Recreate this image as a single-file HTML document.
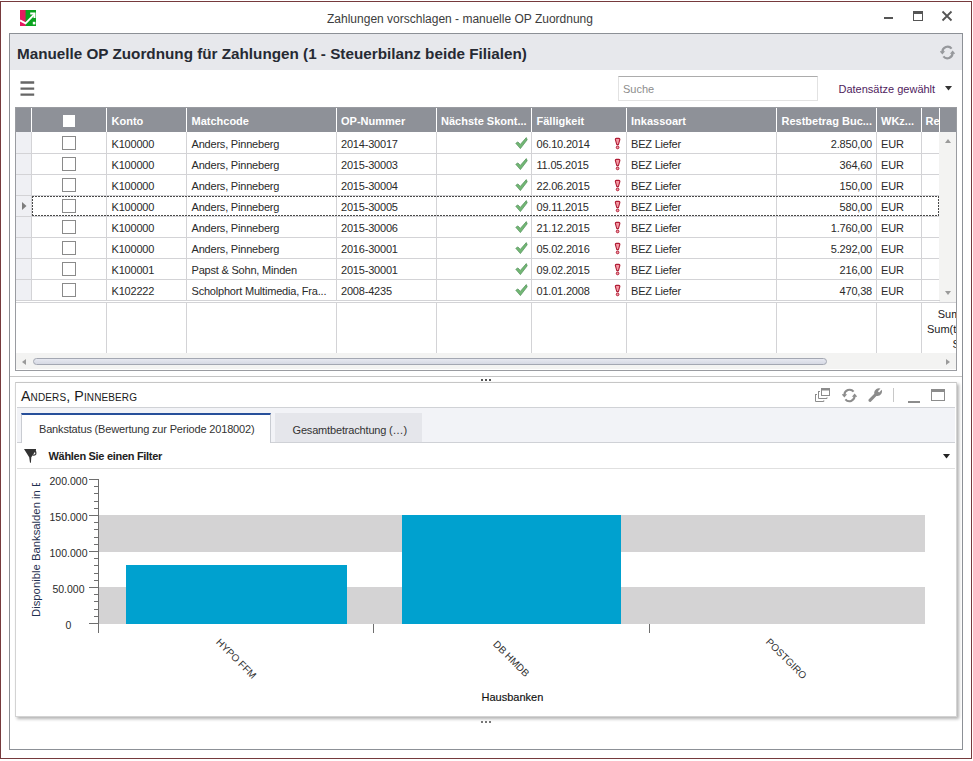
<!DOCTYPE html>
<html><head><meta charset="utf-8"><style>
html,body{margin:0;padding:0;width:973px;height:761px;overflow:hidden;background:#fff;}
body{position:relative;font-family:"Liberation Sans", sans-serif;}
div{position:absolute;box-sizing:content-box;}
.t{white-space:nowrap;}
</style></head><body>
<div style="left:0;top:1px;width:970px;height:756px;border:1px solid #763a3d;background:#fff"></div>
<svg style="position:absolute;left:20px;top:10px" width="16" height="16" viewBox="0 0 16 16">
<rect x="0" y="0" width="16" height="16" fill="#0aa31e"/><rect x="0" y="0" width="5.6" height="16" fill="#e5195e"/>
<path d="M0 10.4 L5.6 13.3 L14 4.6" stroke="#fff" stroke-width="1.9" fill="none"/>
<path d="M10.2 3.6 L14.5 3.6 L14.5 8" stroke="#fff" stroke-width="2" fill="none"/>
<rect x="12.8" y="11.8" width="2.6" height="2.6" fill="#fff"/></svg>
<div class="t" style="left:160px;width:600px;text-align:center;top:12.84px;font-size:12px;line-height:12px;color:#3c3c3c;font-weight:400;">Zahlungen vorschlagen - manuelle OP Zuordnung</div>
<div style="left:884px;top:17px;width:9px;height:2px;background:#555;"></div>
<div style="left:913px;top:11px;width:8px;height:6px;border:1px solid #555;border-top:3px solid #555"></div>
<svg style="position:absolute;left:941px;top:10px" width="12" height="12" viewBox="0 0 12 12">
<path d="M1.5 1.5 L10.5 10.5 M10.5 1.5 L1.5 10.5" stroke="#555" stroke-width="1.8"/></svg>
<div style="left:9px;top:33px;width:952px;height:715px;border:1px solid #8c9096;background:#fff"></div>
<div style="left:10px;top:34px;width:952px;height:36px;background:#e7e8ec;"></div>
<div class="t" style="left:17px;top:46.09px;font-size:15.25px;line-height:15.25px;color:#262a33;font-weight:700;">Manuelle OP Zuordnung für Zahlungen (1 - Steuerbilanz beide Filialen)</div>
<svg style="position:absolute;left:940px;top:44.5px" width="15" height="15" viewBox="0 0 15 15">
<path d="M11.6 3.6 A5.2 5.2 0 0 0 2.4 7" stroke="#96989c" stroke-width="2.2" fill="none"/>
<path d="M-0.3 6.3 L5.1 6.3 L2.4 9.6 Z" fill="#96989c"/>
<path d="M3.4 11.4 A5.2 5.2 0 0 0 12.6 8" stroke="#96989c" stroke-width="2.2" fill="none"/>
<path d="M9.9 8.7 L15.3 8.7 L12.6 5.4 Z" fill="#96989c"/></svg>
<svg style="position:absolute;left:18px;top:78px" width="20" height="20"><path d="M2.5 4.45 H16.2 M2.5 10.65 H16.2 M2.5 16.65 H16.2" stroke="#666" stroke-width="2.4"/></svg>
<div style="left:618px;top:76px;width:198px;height:23px;border:1px solid #e2e2e2;border-top-color:#acacac;background:#fff"></div>
<div class="t" style="left:623px;top:83.69px;font-size:11px;line-height:11px;color:#8d8d8d;font-weight:400;">Suche</div>
<div class="t" style="left:838.5px;top:84.19px;font-size:11px;line-height:11px;color:#4f1c5e;font-weight:400;">Datensätze gewählt</div>
<svg style="position:absolute;left:945px;top:86px" width="7" height="5"><path d="M0 0 L7 0 L3.5 4.5Z" fill="#333"/></svg>
<div style="left:15px;top:107px;width:940px;height:262px;border:1px solid #9a9ca1;background:#fff"></div>
<div style="left:16px;top:108px;width:940px;height:24px;background:#8e9198;"></div>
<div style="left:31px;top:108px;width:1px;height:24px;background:#fff;"></div>
<div style="left:106px;top:108px;width:1px;height:24px;background:#fff;"></div>
<div style="left:186px;top:108px;width:1px;height:24px;background:#fff;"></div>
<div style="left:336px;top:108px;width:1px;height:24px;background:#fff;"></div>
<div style="left:436px;top:108px;width:1px;height:24px;background:#fff;"></div>
<div style="left:531px;top:108px;width:1px;height:24px;background:#fff;"></div>
<div style="left:626px;top:108px;width:1px;height:24px;background:#fff;"></div>
<div style="left:776px;top:108px;width:1px;height:24px;background:#fff;"></div>
<div style="left:876px;top:108px;width:1px;height:24px;background:#fff;"></div>
<div style="left:921px;top:108px;width:1px;height:24px;background:#fff;"></div>
<div style="left:939px;top:108px;width:1px;height:24px;background:#fff;"></div>
<div style="left:940px;top:108px;width:16px;height:24px;background:#8e9198;"></div>
<div style="left:63px;top:115px;width:12px;height:12px;background:#fff;"></div>
<div class="t" style="left:111.5px;top:115.89px;font-size:11px;line-height:11px;color:#fff;font-weight:700;">Konto</div>
<div class="t" style="left:191.5px;top:115.89px;font-size:11px;line-height:11px;color:#fff;font-weight:700;">Matchcode</div>
<div class="t" style="left:341px;top:115.89px;font-size:11px;line-height:11px;color:#fff;font-weight:700;">OP-Nummer</div>
<div class="t" style="left:441px;top:115.89px;font-size:11px;line-height:11px;color:#fff;font-weight:700;">Nächste Skont...</div>
<div class="t" style="left:536.5px;top:115.89px;font-size:11px;line-height:11px;color:#fff;font-weight:700;">Fälligkeit</div>
<div class="t" style="left:631px;top:115.89px;font-size:11px;line-height:11px;color:#fff;font-weight:700;">Inkassoart</div>
<div class="t" style="left:781.5px;top:115.89px;font-size:11px;line-height:11px;color:#fff;font-weight:700;">Restbetrag Buc...</div>
<div class="t" style="left:881px;top:115.89px;font-size:11px;line-height:11px;color:#fff;font-weight:700;">WKz...</div>
<div style="position:absolute;left:921px;top:108px;width:18px;height:24px;overflow:hidden"><div class="t" style="left:4.5px;top:7.9px;font-size:11px;line-height:11px;color:#fff;font-weight:700">Re</div></div>
<div style="left:16px;top:132px;width:15px;height:168px;background:#eff0f4;"></div>
<div style="left:16px;top:153px;width:923px;height:1px;background:#d3d3d6;"></div>
<div style="left:16px;top:174px;width:923px;height:1px;background:#d3d3d6;"></div>
<div style="left:16px;top:195px;width:923px;height:1px;background:#d3d3d6;"></div>
<div style="left:16px;top:216px;width:923px;height:1px;background:#d3d3d6;"></div>
<div style="left:16px;top:237px;width:923px;height:1px;background:#d3d3d6;"></div>
<div style="left:16px;top:258px;width:923px;height:1px;background:#d3d3d6;"></div>
<div style="left:16px;top:279px;width:923px;height:1px;background:#d3d3d6;"></div>
<div style="left:16px;top:300px;width:923px;height:1px;background:#d3d3d6;"></div>
<div style="left:31px;top:132px;width:1px;height:168px;background:#d3d3d6;"></div>
<div style="left:106px;top:132px;width:1px;height:168px;background:#d3d3d6;"></div>
<div style="left:186px;top:132px;width:1px;height:168px;background:#d3d3d6;"></div>
<div style="left:336px;top:132px;width:1px;height:168px;background:#d3d3d6;"></div>
<div style="left:436px;top:132px;width:1px;height:168px;background:#d3d3d6;"></div>
<div style="left:531px;top:132px;width:1px;height:168px;background:#d3d3d6;"></div>
<div style="left:626px;top:132px;width:1px;height:168px;background:#d3d3d6;"></div>
<div style="left:776px;top:132px;width:1px;height:168px;background:#d3d3d6;"></div>
<div style="left:876px;top:132px;width:1px;height:168px;background:#d3d3d6;"></div>
<div style="left:921px;top:132px;width:1px;height:168px;background:#d3d3d6;"></div>
<div style="left:16px;top:302px;width:940px;height:1px;background:#d3d3d6;"></div>
<div style="left:62px;top:136px;width:12px;height:12px;border:1px solid #8a8a8a;background:#fff"></div>
<div class="t" style="left:111.5px;top:138.69px;font-size:11px;line-height:11px;color:#2a2a2a;font-weight:400;letter-spacing:-0.2px">K100000</div>
<div class="t" style="left:191.5px;top:138.69px;font-size:11px;line-height:11px;color:#2a2a2a;font-weight:400;letter-spacing:-0.2px">Anders, Pinneberg</div>
<div class="t" style="left:341px;top:138.69px;font-size:11px;line-height:11px;color:#2a2a2a;font-weight:400;letter-spacing:-0.2px">2014-30017</div>
<div class="t" style="left:536.5px;top:138.69px;font-size:11px;line-height:11px;color:#2a2a2a;font-weight:400;letter-spacing:-0.2px">06.10.2014</div>
<div class="t" style="left:631px;top:138.69px;font-size:11px;line-height:11px;color:#2a2a2a;font-weight:400;letter-spacing:-0.2px">BEZ Liefer</div>
<div class="t" style="right:101px;top:138.69px;font-size:11px;line-height:11px;color:#2a2a2a;font-weight:400;text-align:right;letter-spacing:-0.2px">2.850,00</div>
<div class="t" style="left:881px;top:138.69px;font-size:11px;line-height:11px;color:#2a2a2a;font-weight:400;letter-spacing:-0.2px">EUR</div>
<svg style="position:absolute;left:515px;top:137px" width="13" height="13" viewBox="0 0 13 13"><path d="M0.8 6.3 L2.9 4.9 L5.3 7.4 L11.3 0.6 L12.2 2.8 L5.4 11.6 Z" fill="#72b874" stroke="#4f8d58" stroke-width="0.7" stroke-linejoin="round"/></svg>
<svg style="position:absolute;left:613px;top:136px" width="9" height="14" viewBox="0 0 9 14"><path d="M2.3 3.4 Q2.3 2.4 3.3 2.4 L5.9 2.4 Q6.9 2.4 6.9 3.4 L5.4 8.6 L3.8 8.6 Z" fill="#f59aa5" stroke="#b01c35" stroke-width="1.1" stroke-linejoin="round"/><circle cx="4.6" cy="11.4" r="1.35" fill="#f59aa5" stroke="#b01c35" stroke-width="1"/></svg>
<div style="left:62px;top:157px;width:12px;height:12px;border:1px solid #8a8a8a;background:#fff"></div>
<div class="t" style="left:111.5px;top:159.69px;font-size:11px;line-height:11px;color:#2a2a2a;font-weight:400;letter-spacing:-0.2px">K100000</div>
<div class="t" style="left:191.5px;top:159.69px;font-size:11px;line-height:11px;color:#2a2a2a;font-weight:400;letter-spacing:-0.2px">Anders, Pinneberg</div>
<div class="t" style="left:341px;top:159.69px;font-size:11px;line-height:11px;color:#2a2a2a;font-weight:400;letter-spacing:-0.2px">2015-30003</div>
<div class="t" style="left:536.5px;top:159.69px;font-size:11px;line-height:11px;color:#2a2a2a;font-weight:400;letter-spacing:-0.2px">11.05.2015</div>
<div class="t" style="left:631px;top:159.69px;font-size:11px;line-height:11px;color:#2a2a2a;font-weight:400;letter-spacing:-0.2px">BEZ Liefer</div>
<div class="t" style="right:101px;top:159.69px;font-size:11px;line-height:11px;color:#2a2a2a;font-weight:400;text-align:right;letter-spacing:-0.2px">364,60</div>
<div class="t" style="left:881px;top:159.69px;font-size:11px;line-height:11px;color:#2a2a2a;font-weight:400;letter-spacing:-0.2px">EUR</div>
<svg style="position:absolute;left:515px;top:158px" width="13" height="13" viewBox="0 0 13 13"><path d="M0.8 6.3 L2.9 4.9 L5.3 7.4 L11.3 0.6 L12.2 2.8 L5.4 11.6 Z" fill="#72b874" stroke="#4f8d58" stroke-width="0.7" stroke-linejoin="round"/></svg>
<svg style="position:absolute;left:613px;top:157px" width="9" height="14" viewBox="0 0 9 14"><path d="M2.3 3.4 Q2.3 2.4 3.3 2.4 L5.9 2.4 Q6.9 2.4 6.9 3.4 L5.4 8.6 L3.8 8.6 Z" fill="#f59aa5" stroke="#b01c35" stroke-width="1.1" stroke-linejoin="round"/><circle cx="4.6" cy="11.4" r="1.35" fill="#f59aa5" stroke="#b01c35" stroke-width="1"/></svg>
<div style="left:62px;top:178px;width:12px;height:12px;border:1px solid #8a8a8a;background:#fff"></div>
<div class="t" style="left:111.5px;top:180.69px;font-size:11px;line-height:11px;color:#2a2a2a;font-weight:400;letter-spacing:-0.2px">K100000</div>
<div class="t" style="left:191.5px;top:180.69px;font-size:11px;line-height:11px;color:#2a2a2a;font-weight:400;letter-spacing:-0.2px">Anders, Pinneberg</div>
<div class="t" style="left:341px;top:180.69px;font-size:11px;line-height:11px;color:#2a2a2a;font-weight:400;letter-spacing:-0.2px">2015-30004</div>
<div class="t" style="left:536.5px;top:180.69px;font-size:11px;line-height:11px;color:#2a2a2a;font-weight:400;letter-spacing:-0.2px">22.06.2015</div>
<div class="t" style="left:631px;top:180.69px;font-size:11px;line-height:11px;color:#2a2a2a;font-weight:400;letter-spacing:-0.2px">BEZ Liefer</div>
<div class="t" style="right:101px;top:180.69px;font-size:11px;line-height:11px;color:#2a2a2a;font-weight:400;text-align:right;letter-spacing:-0.2px">150,00</div>
<div class="t" style="left:881px;top:180.69px;font-size:11px;line-height:11px;color:#2a2a2a;font-weight:400;letter-spacing:-0.2px">EUR</div>
<svg style="position:absolute;left:515px;top:179px" width="13" height="13" viewBox="0 0 13 13"><path d="M0.8 6.3 L2.9 4.9 L5.3 7.4 L11.3 0.6 L12.2 2.8 L5.4 11.6 Z" fill="#72b874" stroke="#4f8d58" stroke-width="0.7" stroke-linejoin="round"/></svg>
<svg style="position:absolute;left:613px;top:178px" width="9" height="14" viewBox="0 0 9 14"><path d="M2.3 3.4 Q2.3 2.4 3.3 2.4 L5.9 2.4 Q6.9 2.4 6.9 3.4 L5.4 8.6 L3.8 8.6 Z" fill="#f59aa5" stroke="#b01c35" stroke-width="1.1" stroke-linejoin="round"/><circle cx="4.6" cy="11.4" r="1.35" fill="#f59aa5" stroke="#b01c35" stroke-width="1"/></svg>
<div style="left:62px;top:199px;width:12px;height:12px;border:1px solid #8a8a8a;background:#fff"></div>
<div class="t" style="left:111.5px;top:201.69px;font-size:11px;line-height:11px;color:#2a2a2a;font-weight:400;letter-spacing:-0.2px">K100000</div>
<div class="t" style="left:191.5px;top:201.69px;font-size:11px;line-height:11px;color:#2a2a2a;font-weight:400;letter-spacing:-0.2px">Anders, Pinneberg</div>
<div class="t" style="left:341px;top:201.69px;font-size:11px;line-height:11px;color:#2a2a2a;font-weight:400;letter-spacing:-0.2px">2015-30005</div>
<div class="t" style="left:536.5px;top:201.69px;font-size:11px;line-height:11px;color:#2a2a2a;font-weight:400;letter-spacing:-0.2px">09.11.2015</div>
<div class="t" style="left:631px;top:201.69px;font-size:11px;line-height:11px;color:#2a2a2a;font-weight:400;letter-spacing:-0.2px">BEZ Liefer</div>
<div class="t" style="right:101px;top:201.69px;font-size:11px;line-height:11px;color:#2a2a2a;font-weight:400;text-align:right;letter-spacing:-0.2px">580,00</div>
<div class="t" style="left:881px;top:201.69px;font-size:11px;line-height:11px;color:#2a2a2a;font-weight:400;letter-spacing:-0.2px">EUR</div>
<svg style="position:absolute;left:515px;top:200px" width="13" height="13" viewBox="0 0 13 13"><path d="M0.8 6.3 L2.9 4.9 L5.3 7.4 L11.3 0.6 L12.2 2.8 L5.4 11.6 Z" fill="#72b874" stroke="#4f8d58" stroke-width="0.7" stroke-linejoin="round"/></svg>
<svg style="position:absolute;left:613px;top:199px" width="9" height="14" viewBox="0 0 9 14"><path d="M2.3 3.4 Q2.3 2.4 3.3 2.4 L5.9 2.4 Q6.9 2.4 6.9 3.4 L5.4 8.6 L3.8 8.6 Z" fill="#f59aa5" stroke="#b01c35" stroke-width="1.1" stroke-linejoin="round"/><circle cx="4.6" cy="11.4" r="1.35" fill="#f59aa5" stroke="#b01c35" stroke-width="1"/></svg>
<div style="left:62px;top:220px;width:12px;height:12px;border:1px solid #8a8a8a;background:#fff"></div>
<div class="t" style="left:111.5px;top:222.69px;font-size:11px;line-height:11px;color:#2a2a2a;font-weight:400;letter-spacing:-0.2px">K100000</div>
<div class="t" style="left:191.5px;top:222.69px;font-size:11px;line-height:11px;color:#2a2a2a;font-weight:400;letter-spacing:-0.2px">Anders, Pinneberg</div>
<div class="t" style="left:341px;top:222.69px;font-size:11px;line-height:11px;color:#2a2a2a;font-weight:400;letter-spacing:-0.2px">2015-30006</div>
<div class="t" style="left:536.5px;top:222.69px;font-size:11px;line-height:11px;color:#2a2a2a;font-weight:400;letter-spacing:-0.2px">21.12.2015</div>
<div class="t" style="left:631px;top:222.69px;font-size:11px;line-height:11px;color:#2a2a2a;font-weight:400;letter-spacing:-0.2px">BEZ Liefer</div>
<div class="t" style="right:101px;top:222.69px;font-size:11px;line-height:11px;color:#2a2a2a;font-weight:400;text-align:right;letter-spacing:-0.2px">1.760,00</div>
<div class="t" style="left:881px;top:222.69px;font-size:11px;line-height:11px;color:#2a2a2a;font-weight:400;letter-spacing:-0.2px">EUR</div>
<svg style="position:absolute;left:515px;top:221px" width="13" height="13" viewBox="0 0 13 13"><path d="M0.8 6.3 L2.9 4.9 L5.3 7.4 L11.3 0.6 L12.2 2.8 L5.4 11.6 Z" fill="#72b874" stroke="#4f8d58" stroke-width="0.7" stroke-linejoin="round"/></svg>
<svg style="position:absolute;left:613px;top:220px" width="9" height="14" viewBox="0 0 9 14"><path d="M2.3 3.4 Q2.3 2.4 3.3 2.4 L5.9 2.4 Q6.9 2.4 6.9 3.4 L5.4 8.6 L3.8 8.6 Z" fill="#f59aa5" stroke="#b01c35" stroke-width="1.1" stroke-linejoin="round"/><circle cx="4.6" cy="11.4" r="1.35" fill="#f59aa5" stroke="#b01c35" stroke-width="1"/></svg>
<div style="left:62px;top:241px;width:12px;height:12px;border:1px solid #8a8a8a;background:#fff"></div>
<div class="t" style="left:111.5px;top:243.69px;font-size:11px;line-height:11px;color:#2a2a2a;font-weight:400;letter-spacing:-0.2px">K100000</div>
<div class="t" style="left:191.5px;top:243.69px;font-size:11px;line-height:11px;color:#2a2a2a;font-weight:400;letter-spacing:-0.2px">Anders, Pinneberg</div>
<div class="t" style="left:341px;top:243.69px;font-size:11px;line-height:11px;color:#2a2a2a;font-weight:400;letter-spacing:-0.2px">2016-30001</div>
<div class="t" style="left:536.5px;top:243.69px;font-size:11px;line-height:11px;color:#2a2a2a;font-weight:400;letter-spacing:-0.2px">05.02.2016</div>
<div class="t" style="left:631px;top:243.69px;font-size:11px;line-height:11px;color:#2a2a2a;font-weight:400;letter-spacing:-0.2px">BEZ Liefer</div>
<div class="t" style="right:101px;top:243.69px;font-size:11px;line-height:11px;color:#2a2a2a;font-weight:400;text-align:right;letter-spacing:-0.2px">5.292,00</div>
<div class="t" style="left:881px;top:243.69px;font-size:11px;line-height:11px;color:#2a2a2a;font-weight:400;letter-spacing:-0.2px">EUR</div>
<svg style="position:absolute;left:515px;top:242px" width="13" height="13" viewBox="0 0 13 13"><path d="M0.8 6.3 L2.9 4.9 L5.3 7.4 L11.3 0.6 L12.2 2.8 L5.4 11.6 Z" fill="#72b874" stroke="#4f8d58" stroke-width="0.7" stroke-linejoin="round"/></svg>
<svg style="position:absolute;left:613px;top:241px" width="9" height="14" viewBox="0 0 9 14"><path d="M2.3 3.4 Q2.3 2.4 3.3 2.4 L5.9 2.4 Q6.9 2.4 6.9 3.4 L5.4 8.6 L3.8 8.6 Z" fill="#f59aa5" stroke="#b01c35" stroke-width="1.1" stroke-linejoin="round"/><circle cx="4.6" cy="11.4" r="1.35" fill="#f59aa5" stroke="#b01c35" stroke-width="1"/></svg>
<div style="left:62px;top:262px;width:12px;height:12px;border:1px solid #8a8a8a;background:#fff"></div>
<div class="t" style="left:111.5px;top:264.69px;font-size:11px;line-height:11px;color:#2a2a2a;font-weight:400;letter-spacing:-0.2px">K100001</div>
<div class="t" style="left:191.5px;top:264.69px;font-size:11px;line-height:11px;color:#2a2a2a;font-weight:400;letter-spacing:-0.2px">Papst &amp; Sohn, Minden</div>
<div class="t" style="left:341px;top:264.69px;font-size:11px;line-height:11px;color:#2a2a2a;font-weight:400;letter-spacing:-0.2px">2015-30001</div>
<div class="t" style="left:536.5px;top:264.69px;font-size:11px;line-height:11px;color:#2a2a2a;font-weight:400;letter-spacing:-0.2px">09.02.2015</div>
<div class="t" style="left:631px;top:264.69px;font-size:11px;line-height:11px;color:#2a2a2a;font-weight:400;letter-spacing:-0.2px">BEZ Liefer</div>
<div class="t" style="right:101px;top:264.69px;font-size:11px;line-height:11px;color:#2a2a2a;font-weight:400;text-align:right;letter-spacing:-0.2px">216,00</div>
<div class="t" style="left:881px;top:264.69px;font-size:11px;line-height:11px;color:#2a2a2a;font-weight:400;letter-spacing:-0.2px">EUR</div>
<svg style="position:absolute;left:515px;top:263px" width="13" height="13" viewBox="0 0 13 13"><path d="M0.8 6.3 L2.9 4.9 L5.3 7.4 L11.3 0.6 L12.2 2.8 L5.4 11.6 Z" fill="#72b874" stroke="#4f8d58" stroke-width="0.7" stroke-linejoin="round"/></svg>
<svg style="position:absolute;left:613px;top:262px" width="9" height="14" viewBox="0 0 9 14"><path d="M2.3 3.4 Q2.3 2.4 3.3 2.4 L5.9 2.4 Q6.9 2.4 6.9 3.4 L5.4 8.6 L3.8 8.6 Z" fill="#f59aa5" stroke="#b01c35" stroke-width="1.1" stroke-linejoin="round"/><circle cx="4.6" cy="11.4" r="1.35" fill="#f59aa5" stroke="#b01c35" stroke-width="1"/></svg>
<div style="left:62px;top:283px;width:12px;height:12px;border:1px solid #8a8a8a;background:#fff"></div>
<div class="t" style="left:111.5px;top:285.69px;font-size:11px;line-height:11px;color:#2a2a2a;font-weight:400;letter-spacing:-0.2px">K102222</div>
<div class="t" style="left:191.5px;top:285.69px;font-size:11px;line-height:11px;color:#2a2a2a;font-weight:400;letter-spacing:-0.2px">Scholphort Multimedia, Fra...</div>
<div class="t" style="left:341px;top:285.69px;font-size:11px;line-height:11px;color:#2a2a2a;font-weight:400;letter-spacing:-0.2px">2008-4235</div>
<div class="t" style="left:536.5px;top:285.69px;font-size:11px;line-height:11px;color:#2a2a2a;font-weight:400;letter-spacing:-0.2px">01.01.2008</div>
<div class="t" style="left:631px;top:285.69px;font-size:11px;line-height:11px;color:#2a2a2a;font-weight:400;letter-spacing:-0.2px">BEZ Liefer</div>
<div class="t" style="right:101px;top:285.69px;font-size:11px;line-height:11px;color:#2a2a2a;font-weight:400;text-align:right;letter-spacing:-0.2px">470,38</div>
<div class="t" style="left:881px;top:285.69px;font-size:11px;line-height:11px;color:#2a2a2a;font-weight:400;letter-spacing:-0.2px">EUR</div>
<svg style="position:absolute;left:515px;top:284px" width="13" height="13" viewBox="0 0 13 13"><path d="M0.8 6.3 L2.9 4.9 L5.3 7.4 L11.3 0.6 L12.2 2.8 L5.4 11.6 Z" fill="#72b874" stroke="#4f8d58" stroke-width="0.7" stroke-linejoin="round"/></svg>
<svg style="position:absolute;left:613px;top:283px" width="9" height="14" viewBox="0 0 9 14"><path d="M2.3 3.4 Q2.3 2.4 3.3 2.4 L5.9 2.4 Q6.9 2.4 6.9 3.4 L5.4 8.6 L3.8 8.6 Z" fill="#f59aa5" stroke="#b01c35" stroke-width="1.1" stroke-linejoin="round"/><circle cx="4.6" cy="11.4" r="1.35" fill="#f59aa5" stroke="#b01c35" stroke-width="1"/></svg>
<svg style="position:absolute;left:22px;top:202px" width="5" height="8"><path d="M0 0 L4.5 4 L0 8Z" fill="#7d7d7d"/></svg>
<div style="left:32px;top:196px;width:907px;height:1px;background:repeating-linear-gradient(90deg,#4a4a4a 0 2px,transparent 2px 3px);"></div>
<div style="left:32px;top:215px;width:907px;height:1px;background:repeating-linear-gradient(90deg,#4a4a4a 0 2px,transparent 2px 3px);"></div>
<div style="left:32px;top:196px;width:1px;height:20px;background:repeating-linear-gradient(180deg,#4a4a4a 0 2px,transparent 2px 3px);"></div>
<div style="left:938px;top:196px;width:1px;height:20px;background:repeating-linear-gradient(180deg,#4a4a4a 0 2px,transparent 2px 3px);"></div>
<div style="left:939px;top:132px;width:17px;height:170px;background:#f3f3f2;"></div>
<svg style="position:absolute;left:945px;top:139px" width="6" height="4"><path d="M0 4 L3 0 L6 4Z" fill="#9a9a9a"/></svg>
<svg style="position:absolute;left:945px;top:291px" width="6" height="4"><path d="M0 0 L3 4 L6 0Z" fill="#9a9a9a"/></svg>
<div style="left:939px;top:300px;width:1px;height:1px;background:#d3d3d6;"></div>
<div style="left:106px;top:303px;width:1px;height:50px;background:#d3d3d6;"></div>
<div style="left:186px;top:303px;width:1px;height:50px;background:#d3d3d6;"></div>
<div style="left:336px;top:303px;width:1px;height:50px;background:#d3d3d6;"></div>
<div style="left:436px;top:303px;width:1px;height:50px;background:#d3d3d6;"></div>
<div style="left:531px;top:303px;width:1px;height:50px;background:#d3d3d6;"></div>
<div style="left:626px;top:303px;width:1px;height:50px;background:#d3d3d6;"></div>
<div style="left:776px;top:303px;width:1px;height:50px;background:#d3d3d6;"></div>
<div style="left:876px;top:303px;width:1px;height:50px;background:#d3d3d6;"></div>
<div style="left:921px;top:303px;width:1px;height:50px;background:#d3d3d6;"></div>
<div style="position:absolute;left:921px;top:303px;width:35px;height:50px;overflow:hidden"><div class="t" style="left:16.7px;top:6.1px;font-size:11px;line-height:11px;color:#222">Sum</div><div class="t" style="left:6px;top:21.1px;font-size:11px;line-height:11px;color:#222">Sum(t</div><div class="t" style="left:31.6px;top:36.1px;font-size:11px;line-height:11px;color:#222">S</div></div>
<div style="left:16px;top:353px;width:940px;height:16px;background:#f3f3f2;"></div>
<svg style="position:absolute;left:22px;top:359px" width="4" height="6"><path d="M4 0 L0 3 L4 6Z" fill="#9a9a9a"/></svg>
<svg style="position:absolute;left:946px;top:359px" width="4" height="6"><path d="M0 0 L4 3 L0 6Z" fill="#9a9a9a"/></svg>
<div style="left:33px;top:358px;width:792px;height:5px;border:1px solid #a3a7b2;border-radius:4px;background:linear-gradient(#e6e8f0,#d6d9e4)"></div>
<div style="left:10px;top:376px;width:952px;height:1px;background:#c4c4c4;"></div>
<div style="left:481px;top:379px;width:2px;height:2px;background:#555;"></div>
<div style="left:485px;top:379px;width:2px;height:2px;background:#555;"></div>
<div style="left:489px;top:379px;width:2px;height:2px;background:#555;"></div>
<div style="left:15px;top:382px;width:940px;height:333px;border:1px solid #d3d3d3;border-top-color:#c6c6c6;background:#fff;box-shadow:2px 2px 3px rgba(0,0,0,0.3)"></div>
<div class="t" style="left:21px;top:389.2px;font-size:14.2px;line-height:14px;color:#1a1a1a;font-variant:small-caps;letter-spacing:0.12px">Anders, Pinneberg</div>
<svg style="position:absolute;left:814px;top:387px" width="18" height="16" viewBox="0 0 18 16">
<rect x="7.5" y="1.5" width="8" height="7" fill="none" stroke="#8c8c8c" stroke-width="1"/><rect x="7" y="1" width="9" height="2.5" fill="#8c8c8c"/>
<path d="M4.5 4 L4.5 11.5 L13 11.5 L13 10.3" fill="none" stroke="#8c8c8c" stroke-width="1"/><path d="M5 4.5 L6 4.5" stroke="#8c8c8c" stroke-width="1"/>
<path d="M1.5 7 L1.5 14.5 L9.8 14.5 L9.8 13.3" fill="none" stroke="#8c8c8c" stroke-width="1"/><path d="M2 7.5 L3 7.5" stroke="#8c8c8c" stroke-width="1"/></svg>
<svg style="position:absolute;left:841.5px;top:388px" width="15" height="15" viewBox="0 0 15 15">
<path d="M11.6 3.6 A5.2 5.2 0 0 0 2.4 7" stroke="#8c8c8c" stroke-width="2.0" fill="none"/>
<path d="M-0.3 6.3 L5.1 6.3 L2.4 9.6 Z" fill="#8c8c8c"/>
<path d="M3.4 11.4 A5.2 5.2 0 0 0 12.6 8" stroke="#8c8c8c" stroke-width="2.0" fill="none"/>
<path d="M9.9 8.7 L15.3 8.7 L12.6 5.4 Z" fill="#8c8c8c"/></svg>
<svg style="position:absolute;left:868px;top:388px" width="15" height="15" viewBox="0 0 15 15">
<path d="M0.6 11.4 L6.3 5.7 Q5.7 2.6 8.4 0.9 Q10.3 -0.1 12.5 0.6 L9.9 3.2 L11.1 4.4 L13.7 1.8 Q14.5 4.1 13.2 6.1 Q11.3 8.5 8.4 7.9 L2.8 13.7 Q1.9 14.5 1 13.6 Q0.1 12.6 0.6 11.4 Z" fill="#8c8c8c"/></svg>
<div style="left:893px;top:388px;width:1px;height:14px;background:#c8c8c8;"></div>
<div style="left:908px;top:401px;width:12px;height:2px;background:#8c8c8c;"></div>
<div style="left:931px;top:389px;width:12px;height:8px;border:1px solid #8c8c8c;border-top:3px solid #8c8c8c"></div>
<div style="left:17px;top:407px;width:938px;height:1px;background:#d0d2d6;"></div>
<div style="left:17px;top:408px;width:938px;height:34px;background:#f2f3f7;"></div>
<div style="left:17px;top:442px;width:938px;height:1px;background:#cfd1d6;"></div>
<div style="left:21px;top:413px;width:248px;height:30px;border-left:1px solid #c9ccd2;border-right:1px solid #c9ccd2;border-top:2px solid #274f9a;background:#fff;box-sizing:border-box;width:250px"></div>
<div class="t" style="left:39px;top:424.09px;font-size:11px;line-height:11px;color:#333;font-weight:400;letter-spacing:-0.17px">Bankstatus (Bewertung zur Periode 2018002)</div>
<div style="left:275px;top:413px;width:147px;height:29px;background:#e5e6eb;"></div>
<div class="t" style="left:292.5px;top:424.89px;font-size:11px;line-height:11px;color:#333;font-weight:400;letter-spacing:-0.17px">Gesamtbetrachtung (…)</div>
<svg style="position:absolute;left:24px;top:449px" width="14" height="15" viewBox="0 0 14 15">
<path d="M0 0 L12 0 L12 1.3 L7.3 8.2 L6.9 13.8 L6 13.8 L5.2 8.2 Z" fill="#333"/><path d="M10.6 1.6 Q12.3 3 11.8 5 Q11.1 6.3 8.6 6.2" fill="none" stroke="#333" stroke-width="1.3"/></svg>
<div class="t" style="left:48.5px;top:451.19px;font-size:11px;line-height:11px;color:#222;font-weight:700;letter-spacing:-0.3px">Wählen Sie einen Filter</div>
<svg style="position:absolute;left:943px;top:454px" width="7" height="5"><path d="M0 0 L7 0 L3.5 4.5Z" fill="#222"/></svg>
<div style="left:17px;top:468px;width:938px;height:1px;background:#e0e0e0;"></div>
<div style="left:99px;top:515px;width:826px;height:37px;background:#d4d3d4;"></div>
<div style="left:99px;top:587px;width:826px;height:37px;background:#d4d3d4;"></div>
<div style="left:126px;top:565px;width:221px;height:59px;background:#00a1cf;"></div>
<div style="left:402px;top:515px;width:219px;height:109px;background:#00a1cf;"></div>
<div style="left:98px;top:479px;width:1px;height:154px;background:#6e6e6e;"></div>
<div style="left:89px;top:479px;width:9px;height:1px;background:#6e6e6e;"></div>
<div style="left:94px;top:486px;width:4px;height:1px;background:#6e6e6e;"></div>
<div style="left:94px;top:493px;width:4px;height:1px;background:#6e6e6e;"></div>
<div style="left:94px;top:501px;width:4px;height:1px;background:#6e6e6e;"></div>
<div style="left:94px;top:508px;width:4px;height:1px;background:#6e6e6e;"></div>
<div style="left:89px;top:515px;width:9px;height:1px;background:#6e6e6e;"></div>
<div style="left:94px;top:522px;width:4px;height:1px;background:#6e6e6e;"></div>
<div style="left:94px;top:529px;width:4px;height:1px;background:#6e6e6e;"></div>
<div style="left:94px;top:537px;width:4px;height:1px;background:#6e6e6e;"></div>
<div style="left:94px;top:544px;width:4px;height:1px;background:#6e6e6e;"></div>
<div style="left:89px;top:551px;width:9px;height:1px;background:#6e6e6e;"></div>
<div style="left:94px;top:558px;width:4px;height:1px;background:#6e6e6e;"></div>
<div style="left:94px;top:565px;width:4px;height:1px;background:#6e6e6e;"></div>
<div style="left:94px;top:573px;width:4px;height:1px;background:#6e6e6e;"></div>
<div style="left:94px;top:580px;width:4px;height:1px;background:#6e6e6e;"></div>
<div style="left:89px;top:587px;width:9px;height:1px;background:#6e6e6e;"></div>
<div style="left:94px;top:594px;width:4px;height:1px;background:#6e6e6e;"></div>
<div style="left:94px;top:601px;width:4px;height:1px;background:#6e6e6e;"></div>
<div style="left:94px;top:609px;width:4px;height:1px;background:#6e6e6e;"></div>
<div style="left:94px;top:616px;width:4px;height:1px;background:#6e6e6e;"></div>
<div style="left:89px;top:623px;width:9px;height:1px;background:#6e6e6e;"></div>
<div style="left:98px;top:623px;width:827px;height:0px;background:#444;"></div>
<div style="left:373px;top:624px;width:1px;height:9px;background:#6e6e6e;"></div>
<div style="left:649px;top:624px;width:1px;height:9px;background:#6e6e6e;"></div>
<div class="t" style="left:-231.5px;width:600px;text-align:center;top:475.51px;font-size:10.5px;line-height:10.5px;color:#2a2a2a;font-weight:400;">200.000</div>
<div class="t" style="left:-231.5px;width:600px;text-align:center;top:511.51px;font-size:10.5px;line-height:10.5px;color:#2a2a2a;font-weight:400;">150.000</div>
<div class="t" style="left:-231.5px;width:600px;text-align:center;top:547.51px;font-size:10.5px;line-height:10.5px;color:#2a2a2a;font-weight:400;">100.000</div>
<div class="t" style="left:-231.5px;width:600px;text-align:center;top:583.51px;font-size:10.5px;line-height:10.5px;color:#2a2a2a;font-weight:400;">50.000</div>
<div class="t" style="left:-231.5px;width:600px;text-align:center;top:619.51px;font-size:10.5px;line-height:10.5px;color:#2a2a2a;font-weight:400;">0</div>
<div style="position:absolute;left:22px;top:483px;width:27px;height:135px;overflow:hidden"><div class="t" style="left:13.5px;top:134px;font-size:11.3px;line-height:12px;color:#1f3050;transform-origin:0 0;transform:rotate(-90deg) translate(0,-6px)">Disponible Banksalden in E</div></div>
<div class="t" style="left:186px;top:653px;width:100px;text-align:center;font-size:10px;line-height:12px;color:#333;transform:rotate(45deg)">HYPO FFM</div>
<div class="t" style="left:461px;top:653px;width:100px;text-align:center;font-size:10px;line-height:12px;color:#333;transform:rotate(45deg)">DB HMDB</div>
<div class="t" style="left:736px;top:653px;width:100px;text-align:center;font-size:10px;line-height:12px;color:#333;transform:rotate(45deg)">POSTGIRO</div>
<div class="t" style="left:481.5px;top:691.69px;font-size:11px;line-height:11px;color:#111;font-weight:400;-webkit-text-stroke:0.15px #111">Hausbanken</div>
<div style="left:481px;top:721px;width:2px;height:2px;background:#777;"></div>
<div style="left:485px;top:721px;width:2px;height:2px;background:#777;"></div>
<div style="left:489px;top:721px;width:2px;height:2px;background:#777;"></div>
</body></html>
